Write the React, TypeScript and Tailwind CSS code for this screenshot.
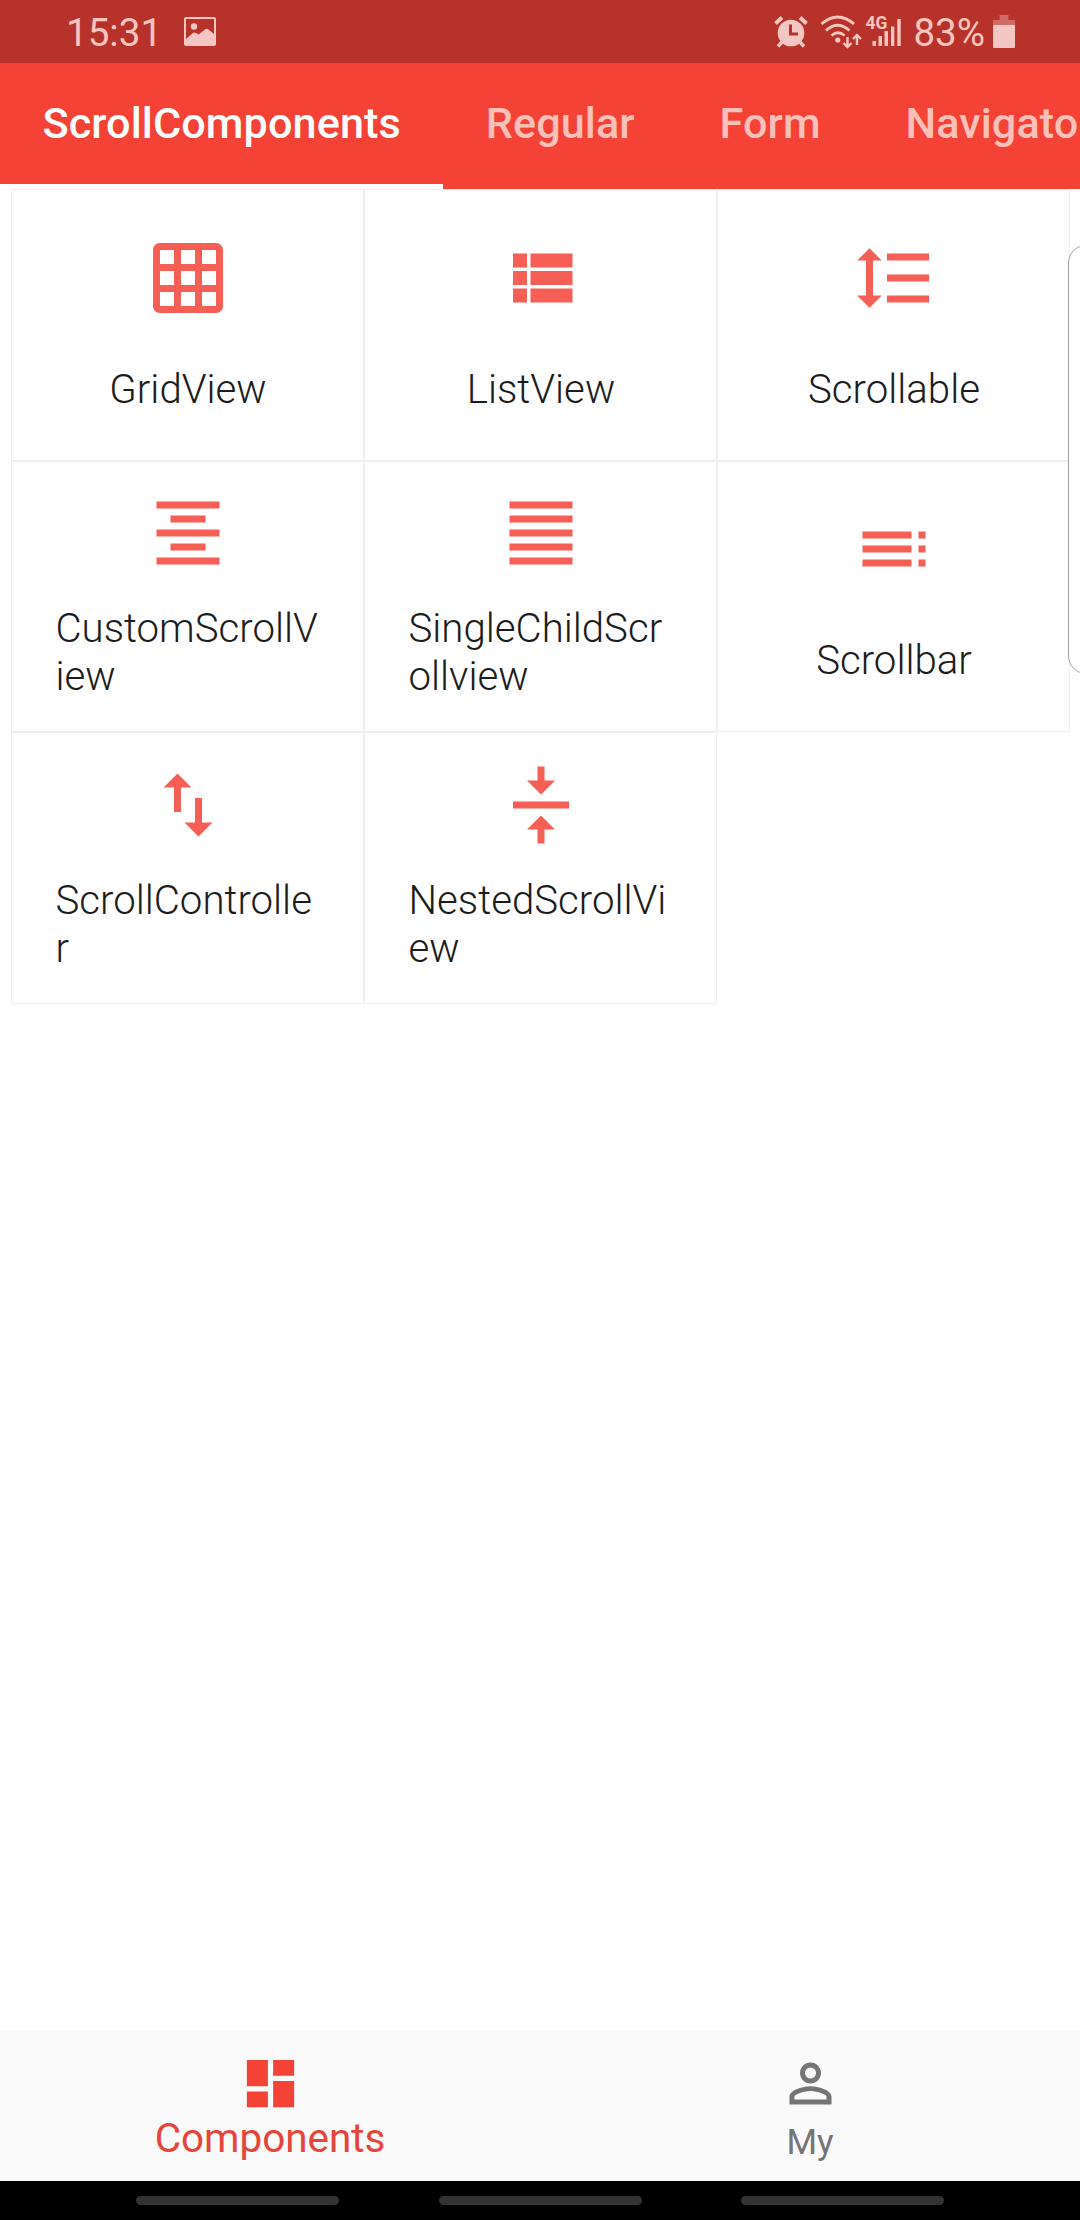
const ICONS = {
  gridOn:
    'M20 2H4c-1.1 0-2 .9-2 2v16c0 1.1.9 2 2 2h16c1.1 0 2-.9 2-2V4c0-1.1-.9-2-2-2zM8 20H4v-4h4v4zm0-6H4v-4h4v4zm0-6H4V4h4v4zm6 12h-4v-4h4v4zm0-6h-4v-4h4v4zm0-6h-4V4h4v4zm6 12h-4v-4h4v4zm0-6h-4v-4h4v4zm0-6h-4V4h4v4z',
  viewList:
    'M4 14h4v-4H4v4zm0 5h4v-4H4v4zM4 9h4V5H4v4zm5 5h12v-4H9v4zm0 5h12v-4H9v4zM9 5v4h12V5H9z',
  lineSpacing:
    'M6 7h2.5L5 3.5 1.5 7H4v10H1.5L5 20.5 8.5 17H6V7zm4-2v2h12V5H10zm0 14h12v-2H10v2zm0-6h12v-2H10v2z',
  alignCenter:
    'M7 15v2h10v-2H7zm-4 6h18v-2H3v2zm0-8h18v-2H3v2zm4-6v2h10V7H7zM3 3v2h18V3H3z',
  alignJustify:
    'M3 21h18v-2H3v2zm0-4h18v-2H3v2zm0-4h18v-2H3v2zm0-4h18V7H3v2zm0-6v2h18V3H3z',
  toc: 'M3 9h14V7H3v2zm0 4h14v-2H3v2zm0 4h14v-2H3v2zm16 0h2v-2h-2v2zm0-10v2h2V7h-2zm0 6h2v-2h-2v2z',
  importExport:
    'M9 3L5 6.99h3V14h2V6.99h3L9 3zm7 14.01V10h-2v7.01h-3L15 21l4-3.99h-3z',
  verticalCenter:
    'M8 19h3v4h2v-4h3l-4-4-4 4zm8-14h-3V1h-2v4H8l4 4 4-4zM4 11v2h16v-2H4z',
  dashboard: 'M3 13h8V3H3v10zm0 8h8v-6H3v6zm10 0h8V11h-8v10zm0-18v6h8V3h-8z',
  personOutline:
    'M12 5.9a2.1 2.1 0 110 4.2 2.1 2.1 0 010-4.2m0 9c2.97 0 6.1 1.46 6.1 2.1v1.1H5.9V17c0-.64 3.13-2.1 6.1-2.1M12 4C9.79 4 8 5.79 8 8s1.79 4 4 4 4-1.79 4-4-1.79-4-4-4zm0 9c-2.67 0-8 1.34-8 4v3h16v-3c0-2.66-5.33-4-8-4z',
};

type IconName = keyof typeof ICONS;

function Icon({ name, className }: { name: IconName; className: string }) {
  return (
    <svg viewBox="0 0 24 24" className={className} fill="currentColor">
      <path d={ICONS[name]} />
    </svg>
  );
}

const CELLS: { icon: IconName; label: string }[] = [
  { icon: 'gridOn', label: 'GridView' },
  { icon: 'viewList', label: 'ListView' },
  { icon: 'lineSpacing', label: 'Scrollable' },
  { icon: 'alignCenter', label: 'CustomScrollView' },
  { icon: 'alignJustify', label: 'SingleChildScrollview' },
  { icon: 'toc', label: 'Scrollbar' },
  { icon: 'importExport', label: 'ScrollController' },
  { icon: 'verticalCenter', label: 'NestedScrollView' },
];

const TABS = ['ScrollComponents', 'Regular', 'Form', 'Navigato'];

function StatusBar() {
  return (
    <div className="flex h-[63px] shrink-0 items-center justify-between bg-[#b6322a] pr-[65px] pl-[66px] text-[38.6px] leading-none text-[#fbc4be]">
      <div className="flex items-center">
        <span className="mt-[4px]">15:31</span>
        <svg className="ml-[22px] h-[29px] w-[32px]" viewBox="0 0 32 29" fill="none">
          <rect x="1" y="1" width="30" height="27" rx="1" stroke="#f3c6c3" strokeWidth="2" />
          <circle cx="10" cy="9.5" r="3.2" fill="#f3c6c3" />
          <path d="M2 22L8.5 16.2q2-1.5 4 0l2 1.4 6.5-5.2q2-1.3 4 .5L30 17v11H2z" fill="#f3c6c3" />
        </svg>
      </div>
      <div className="flex items-center">
        <svg className="h-[32px] w-[34px]" viewBox="0 0 34 32" fill="none" stroke="#f3c6c3">
          <path d="M1.5 7.5L8 1.5M32.5 7.5L26 1.5" strokeWidth="4" />
          <path d="M8 26L4 30.5M26 26L30 30.5" strokeWidth="3.5" />
          <circle cx="17" cy="17" r="13.3" fill="#f3c6c3" stroke="none" />
          <path d="M16.5 8.5V18H24" stroke="#b6322a" strokeWidth="3" />
        </svg>
        <svg className="ml-[12px] h-[34px] w-[43px]" viewBox="0 0 43 34" fill="none" stroke="#fbc4be" strokeWidth="2.8">
          <path d="M1.5 9Q17.5-5 34 9M6 15.5Q17.5 5 29.5 15.5M11.5 20.5Q18 15 24.5 20.5" />
          <circle cx="17.8" cy="25" r="2.6" fill="#fbc4be" stroke="none" />
          <path d="M27.5 22v9.5M23.5 28l4 4 4-4M37 30V20.5M33 24l4-4 4 4" strokeWidth="2.4" />
        </svg>
        <div className="relative ml-[2px] h-[31px] w-[36px]">
          <span className="absolute -top-[1px] left-0 text-[17.5px] leading-none font-bold">4G</span>
          <svg className="h-[31px] w-[36px]" viewBox="0 0 36 31" fill="#fbc4be">
            <path d="M7.5 25H11v5H7.5zM13.5 20H17v10h-3.5zM19.5 15H23v15h-3.5zM26 10.5h3.3V30H26zM32.3 3h3.4v27h-3.4z" />
          </svg>
        </div>
        <span className="mt-[4px] ml-[12px]">83%</span>
        <svg className="ml-[8px] h-[33px] w-[22px]" viewBox="0 0 22 33">
          <path d="M6.5 0h9v5H22v5H0V5h6.5z" fill="#cf6a65" />
          <path d="M0 10h22v22q0 1-1 1H1q-1 0-1-1z" fill="#f3c6c3" />
        </svg>
      </div>
    </div>
  );
}

function TabBar() {
  return (
    <div className="flex h-[126px] shrink-0 overflow-hidden bg-[#f44336] text-[43.2px] leading-none font-medium tracking-[0.1px]">
      {TABS.map((tab, i) => (
        <div
          key={tab}
          className={
            i === 0
              ? 'flex shrink-0 items-center border-b-[5px] border-white px-[42.4px] pt-[1px] text-white'
              : 'flex shrink-0 items-center border-b-[5px] border-transparent px-[42.4px] pt-[1px] text-[#fcc0bb]'
          }
        >
          {tab}
        </div>
      ))}
    </div>
  );
}

function ComponentGrid() {
  return (
    <div className="grid auto-rows-[271.54px] grid-cols-3 px-[10.5px]">
      {CELLS.map((cell) => (
        <div
          key={cell.label}
          className="flex flex-col items-center justify-evenly border border-[#f0f0f0] pr-[42px] pl-[44px]"
        >
          <Icon name={cell.icon} className="size-[84px] shrink-0 text-[#f65f56]" />
          <span className="text-[40.2px] leading-[48px] font-light break-all text-[#1c1c1c]">
            {cell.label}
          </span>
        </div>
      ))}
    </div>
  );
}

function BottomNav() {
  return (
    <div className="flex h-[150px] shrink-0 bg-[#fafafa] shadow-[0_-1px_3px_rgba(0,0,0,0.02)]">
      <div className="flex flex-1 flex-col items-center pt-[21px] text-[#f44336]">
        <Icon name="dashboard" className="size-[63px]" />
        <span className="text-[40.4px] leading-[48px] text-[#e5453b]">Components</span>
      </div>
      <div className="flex flex-1 flex-col items-center pt-[21px] text-[#757575]">
        <Icon name="personOutline" className="size-[63px]" />
        <span className="mt-[4px] text-[35px] leading-[48px]">My</span>
      </div>
    </div>
  );
}

function SystemNav() {
  return (
    <div className="flex h-[39px] shrink-0 items-center justify-center gap-[99.5px] bg-black">
      <div className="h-[9px] w-[203px] rounded-full bg-[#333333]" />
      <div className="h-[9px] w-[203px] rounded-full bg-[#333333]" />
      <div className="h-[9px] w-[203px] rounded-full bg-[#333333]" />
    </div>
  );
}

export default function App() {
  return (
    <div className="relative flex h-[2220px] w-[1080px] flex-col overflow-hidden bg-white font-['Roboto',sans-serif]">
      <StatusBar />
      <TabBar />
      <main className="flex-1">
        <ComponentGrid />
      </main>
      <BottomNav />
      <SystemNav />
      {/* Edge panel handle, partly off screen */}
      <div className="absolute top-[245px] left-[1068px] h-[429px] w-[40px] rounded-[18px] border border-[#a0a0a0] bg-white" />
    </div>
  );
}
